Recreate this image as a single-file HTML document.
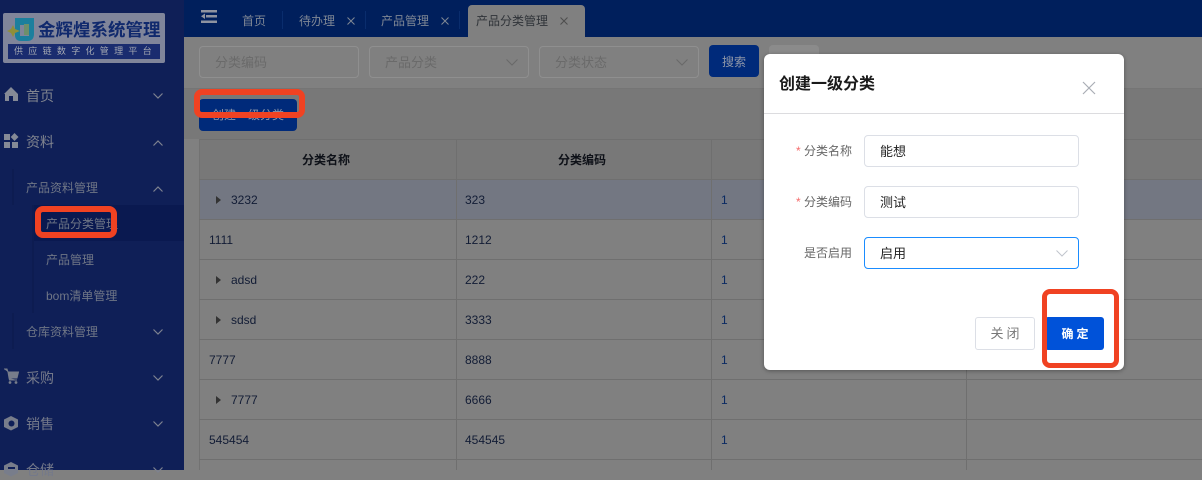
<!DOCTYPE html>
<html lang="zh"><head><meta charset="utf-8">
<style>
html,body{margin:0;padding:0}
body{width:1202px;height:470px;overflow:hidden;position:relative;background:#808080;font-family:"Liberation Sans","Noto Sans CJK SC",sans-serif;font-size:12px}
.a{position:absolute;box-sizing:border-box;white-space:nowrap}
.t{position:absolute;white-space:nowrap;line-height:20px;height:20px}
svg{position:absolute;overflow:visible}
.m{color:#80848f}
.s{color:#6f7686}
.c{color:#121c35}
.in{position:absolute;box-sizing:border-box;border:1px solid #8f8f8f;border-radius:4px;height:32px;width:160px;top:46px;color:#6a6a6a;font-size:13px;line-height:32px;padding-left:15px}
.fi{position:absolute;box-sizing:border-box;left:864px;width:215px;height:32px;border:1px solid #dcdfe6;border-radius:4px;color:#222;font-size:13px;line-height:32px;padding-left:15px;background:#fff}
.l{position:absolute;left:804px;color:#666;font-size:12px;line-height:20px;white-space:nowrap}
.st{position:absolute;left:796px;color:#f56c6c;font-size:12px;line-height:20px}
.r{position:absolute;box-sizing:border-box;border:6px solid #f04222;border-radius:8px}
</style></head><body>
<!-- sidebar -->
<div class="a" style="left:0;top:0;width:184px;height:470px;background:#0f1f57"></div>
<div class="a" style="left:3px;top:13px;width:162px;height:50px;background:#80859a;border-radius:2px"></div>
<svg style="left:7px;top:18px" width="28" height="24" viewBox="0 0 28 24"><path d="M8 0H27V16Q27 23 20 23H14Q8 23 8 17Z" fill="#1c7f9d"/><path d="M6 7L8 11L13 13L8 15L6 19L4 15L0 13L4 11Z" fill="#8f8f3a"/><rect x="13" y="7" width="9" height="11" fill="#80859a"/><rect x="17" y="6" width="5" height="11" fill="#6e8f6b"/></svg>
<div class="t" style="left:38px;top:20px;color:#10296d;font-size:17.5px;font-weight:700">金辉煌系统管理</div>
<div class="a" style="left:8px;top:44px;width:152px;height:15px;background:#1a2c6f"></div>
<div class="t" style="left:14px;top:41px;color:#a4a8b2;font-size:9px;letter-spacing:5.3px">供应链数字化管理平台</div>

<svg style="left:4px;top:87px" width="15" height="15" viewBox="0 0 15 15"><path d="M7 0L14 7V14H9V9H5V14H1V7H0Z" fill="#858a96"/></svg>
<div class="t m" style="left:26px;top:86px;font-size:14px">首页</div>
<svg style="left:153px;top:93px" width="10" height="6"><path d="M.5.5L5 5L9.5.5" fill="none" stroke="#7d8290" stroke-width="1.2"/></svg>

<svg style="left:4px;top:133px" width="15" height="15" viewBox="0 0 15 15"><rect x="0" y="1" width="6" height="6" fill="#858a96"/><path d="M10.5 0L14.5 4L10.5 8L6.7 4Z" fill="#858a96"/><rect x="0" y="9" width="6" height="6" fill="#858a96"/><rect x="8" y="9" width="6" height="6" fill="#858a96"/></svg>
<div class="t m" style="left:26px;top:132px;font-size:14px">资料</div>
<svg style="left:153px;top:140px" width="10" height="6"><path d="M.5 5.5L5 1L9.5 5.5" fill="none" stroke="#7d8290" stroke-width="1.2"/></svg>

<div class="a" style="left:12px;top:169px;width:2px;height:36px;background:#0d1c51"></div>
<div class="t s" style="left:26px;top:178px">产品资料管理</div>
<svg style="left:153px;top:186px" width="10" height="6"><path d="M.5 5.5L5 1L9.5 5.5" fill="none" stroke="#7d8290" stroke-width="1.2"/></svg>

<div class="a" style="left:32px;top:205px;width:2px;height:108px;background:#0d1c51"></div>
<div class="a" style="left:34px;top:205px;width:150px;height:36px;background:#0a1950"></div>
<div class="t s" style="left:46px;top:214px">产品分类管理</div>
<div class="t s" style="left:46px;top:250px">产品管理</div>
<div class="t s" style="left:46px;top:286px">bom清单管理</div>
<div class="a" style="left:12px;top:313px;width:2px;height:36px;background:#0d1c51"></div>
<div class="t s" style="left:26px;top:322px">仓库资料管理</div>
<svg style="left:153px;top:329px" width="10" height="6"><path d="M.5.5L5 5L9.5.5" fill="none" stroke="#7d8290" stroke-width="1.2"/></svg>

<svg style="left:4px;top:369px" width="15" height="15" viewBox="0 0 15 15"><path d="M0 0H3L4 3H14.5L13 9H5L4 3M5 9L5.5 11H13" fill="#787d8b" stroke="#787d8b" stroke-width="1"/><circle cx="6" cy="13.5" r="1.4" fill="#787d8b"/><circle cx="12" cy="13.5" r="1.4" fill="#787d8b"/></svg>
<div class="t m" style="left:26px;top:368px;font-size:14px;color:#74798a">采购</div>
<svg style="left:153px;top:375px" width="10" height="6"><path d="M.5.5L5 5L9.5.5" fill="none" stroke="#7d8290" stroke-width="1.2"/></svg>

<svg style="left:4px;top:416px" width="15" height="15" viewBox="0 0 15 15"><path d="M7 0L14 3.5V11L7 14.5L0 11V3.5Z" fill="#787d8b"/><circle cx="7.5" cy="7.5" r="3" fill="#0f1f57"/></svg>
<div class="t m" style="left:26px;top:414px;font-size:14px;color:#74798a">销售</div>
<svg style="left:153px;top:421px" width="10" height="6"><path d="M.5.5L5 5L9.5.5" fill="none" stroke="#7d8290" stroke-width="1.2"/></svg>

<svg style="left:4px;top:462px" width="15" height="15" viewBox="0 0 15 15"><path d="M7 0L14 3.5V11L7 14.5L0 11V3.5Z" fill="#787d8b"/><rect x="4" y="5" width="7" height="2" fill="#0f1f57"/></svg>
<div class="t m" style="left:26px;top:460px;font-size:14px;color:#74798a">仓储</div>
<svg style="left:153px;top:467px" width="10" height="6"><path d="M.5.5L5 5L9.5.5" fill="none" stroke="#7d8290" stroke-width="1.2"/></svg>

<!-- top bar -->
<div class="a" style="left:184px;top:0;width:1018px;height:37px;background:#001f5c"></div>
<svg style="left:201px;top:10px" width="16" height="13" viewBox="0 0 16 13"><path d="M0 0H16V2.500H0ZM5 5H16V7.500H5ZM0 10.500H16V13H0ZM0 6.200L4 3.500V9Z" fill="#8e93a0"/></svg>
<div class="t" style="left:242px;top:11px;color:#7f8794">首页</div>
<div class="a" style="left:282px;top:11px;width:1px;height:18px;background:#0a2d6d"></div>
<div class="t" style="left:299px;top:11px;color:#7f8794">待办理</div>
<svg style="left:347px;top:17px" width="8" height="8"><path d="M.5.5L7.5 7.5M7.5.5L.5 7.5" stroke="#7f8794" stroke-width="1"/></svg>
<div class="a" style="left:365px;top:11px;width:1px;height:18px;background:#0a2d6d"></div>
<div class="t" style="left:381px;top:11px;color:#7f8794">产品管理</div>
<svg style="left:441px;top:17px" width="8" height="8"><path d="M.5.5L7.5 7.5M7.5.5L.5 7.5" stroke="#7f8794" stroke-width="1"/></svg>
<div class="a" style="left:459px;top:11px;width:1px;height:18px;background:#0a2d6d"></div>
<div class="a" style="left:468px;top:5px;width:117px;height:32px;background:#808080;border-radius:4px 4px 0 0"></div>
<div class="t" style="left:476px;top:11px;color:#2f3338">产品分类管理</div>
<svg style="left:560px;top:17px" width="8" height="8"><path d="M.5.5L7.5 7.5M7.5.5L.5 7.5" stroke="#4e4e4e" stroke-width="1"/></svg>

<!-- filter -->
<div class="a" style="left:184px;top:88px;width:1018px;height:51px;background:#787878;border-top:1px solid #757575"></div>
<div class="in" style="left:199px">分类编码</div>
<div class="in" style="left:369px">产品分类</div>
<svg style="left:506px;top:59px" width="12" height="7"><path d="M.5.5L6 6L11.5.5" fill="none" stroke="#686868" stroke-width="1"/></svg>
<div class="in" style="left:539px">分类状态</div>
<svg style="left:676px;top:59px" width="12" height="7"><path d="M.5.5L6 6L11.5.5" fill="none" stroke="#686868" stroke-width="1"/></svg>
<div class="a" style="left:709px;top:45px;width:50px;height:32px;background:#002a7a;border-radius:4px;color:#8f97a8;line-height:34px;text-align:center">搜索</div>
<div class="a" style="left:769px;top:45px;width:50px;height:32px;background:#8b8b8b;border-radius:4px"></div>
<div class="a" style="left:199px;top:99px;width:98px;height:32px;background:#002a7a;border-radius:4px;color:#8f97a8;line-height:32px;text-align:center">创建一级分类</div>

<!-- table -->
<div class="a" style="left:199px;top:139px;width:1003px;height:40px;background:#787878;border-top:1px solid #6f6f6f"></div>
<div class="a" style="left:199px;top:179px;width:1003px;height:40px;background:#737782"></div>
<div class="a" style="left:199px;top:139px;width:1px;height:331px;background:#727272"></div>
<div class="a" style="left:456px;top:139px;width:1px;height:331px;background:#6f6f6f"></div>
<div class="a" style="left:711px;top:139px;width:1px;height:331px;background:#6f6f6f"></div>
<div class="a" style="left:966px;top:139px;width:1px;height:331px;background:#6f6f6f"></div>
<div class="a" style="left:199px;top:179px;width:1003px;height:1px;background:#6f6f6f"></div>
<div class="a" style="left:199px;top:219px;width:1003px;height:1px;background:#6f6f6f"></div>
<div class="a" style="left:199px;top:259px;width:1003px;height:1px;background:#6f6f6f"></div>
<div class="a" style="left:199px;top:299px;width:1003px;height:1px;background:#6f6f6f"></div>
<div class="a" style="left:199px;top:339px;width:1003px;height:1px;background:#6f6f6f"></div>
<div class="a" style="left:199px;top:379px;width:1003px;height:1px;background:#6f6f6f"></div>
<div class="a" style="left:199px;top:419px;width:1003px;height:1px;background:#6f6f6f"></div>
<div class="a" style="left:199px;top:459px;width:1003px;height:1px;background:#6f6f6f"></div>

<div class="t" style="left:302px;top:150px;font-weight:700;color:#0e1118">分类名称</div>
<div class="t" style="left:558px;top:150px;font-weight:700;color:#0e1118">分类编码</div>

<svg style="left:216px;top:196px" width="5" height="8"><path d="M0 0L5 4L0 8Z" fill="#333"/></svg>
<svg style="left:216px;top:276px" width="5" height="8"><path d="M0 0L5 4L0 8Z" fill="#333"/></svg>
<svg style="left:216px;top:316px" width="5" height="8"><path d="M0 0L5 4L0 8Z" fill="#333"/></svg>
<svg style="left:216px;top:396px" width="5" height="8"><path d="M0 0L5 4L0 8Z" fill="#333"/></svg>
<div class="t c" style="left:231px;top:190px">3232</div>
<div class="t c" style="left:209px;top:230px">1111</div>
<div class="t c" style="left:231px;top:270px">adsd</div>
<div class="t c" style="left:231px;top:310px">sdsd</div>
<div class="t c" style="left:209px;top:350px">7777</div>
<div class="t c" style="left:231px;top:390px">7777</div>
<div class="t c" style="left:209px;top:430px">545454</div>
<div class="t c" style="left:465px;top:190px">323</div>
<div class="t c" style="left:465px;top:230px">1212</div>
<div class="t c" style="left:465px;top:270px">222</div>
<div class="t c" style="left:465px;top:310px">3333</div>
<div class="t c" style="left:465px;top:350px">8888</div>
<div class="t c" style="left:465px;top:390px">6666</div>
<div class="t c" style="left:465px;top:430px">454545</div>
<div class="t" style="left:721px;top:190px;color:#0a2a62">1</div>
<div class="t" style="left:721px;top:230px;color:#0a2a62">1</div>
<div class="t" style="left:721px;top:270px;color:#0a2a62">1</div>
<div class="t" style="left:721px;top:310px;color:#0a2a62">1</div>
<div class="t" style="left:721px;top:350px;color:#0a2a62">1</div>
<div class="t" style="left:721px;top:390px;color:#0a2a62">1</div>
<div class="t" style="left:721px;top:430px;color:#0a2a62">1</div>

<!-- red markers on page -->
<div class="r" style="left:35px;top:206px;width:82px;height:32px"></div>
<div class="r" style="left:194px;top:89px;width:111px;height:29px;background:transparent"></div>

<!-- modal -->
<div class="a" style="left:764px;top:54px;width:360px;height:316px;background:#fff;border-radius:6px;box-shadow:0 1px 4px rgba(0,0,0,.35)"></div>
<div class="t" style="left:779px;top:75px;font-size:16px;font-weight:700;color:#1a1a1a">创建一级分类</div>
<svg style="left:1082px;top:81px" width="14" height="14"><path d="M1 1L13 13M13 1L1 13" stroke="#a9adb5" stroke-width="1.2"/></svg>
<div class="a" style="left:764px;top:113px;width:360px;height:1px;background:#dcdcdf"></div>
<div class="st" style="top:141px">*</div>
<div class="l" style="top:141px">分类名称</div>
<div class="fi" style="top:135px">能想</div>
<div class="st" style="top:192px">*</div>
<div class="l" style="top:192px">分类编码</div>
<div class="fi" style="top:186px">测试</div>
<div class="l" style="top:243px">是否启用</div>
<div class="fi" style="top:237px;border-color:#1a8cff">启用</div>
<svg style="left:1056px;top:250px" width="12" height="7"><path d="M.5.5L6 6L11.5.5" fill="none" stroke="#c0c4cc" stroke-width="1"/></svg>
<div class="a" style="left:975px;top:317px;width:60px;height:33px;border:1px solid #dcdfe6;border-radius:3px;color:#777;line-height:32px;text-align:center;letter-spacing:3px;padding-left:3px;background:#fff;font-size:13px">关闭</div>
<div class="a" style="left:1045px;top:317px;width:59px;height:33px;background:#0052d9;border-radius:3px;color:#fff;font-weight:700;line-height:35px;text-align:center;letter-spacing:3px;padding-left:4px">确定</div>
<div class="r" style="left:1042px;top:289px;width:77px;height:79px;border-width:5px"></div>
</body></html>
